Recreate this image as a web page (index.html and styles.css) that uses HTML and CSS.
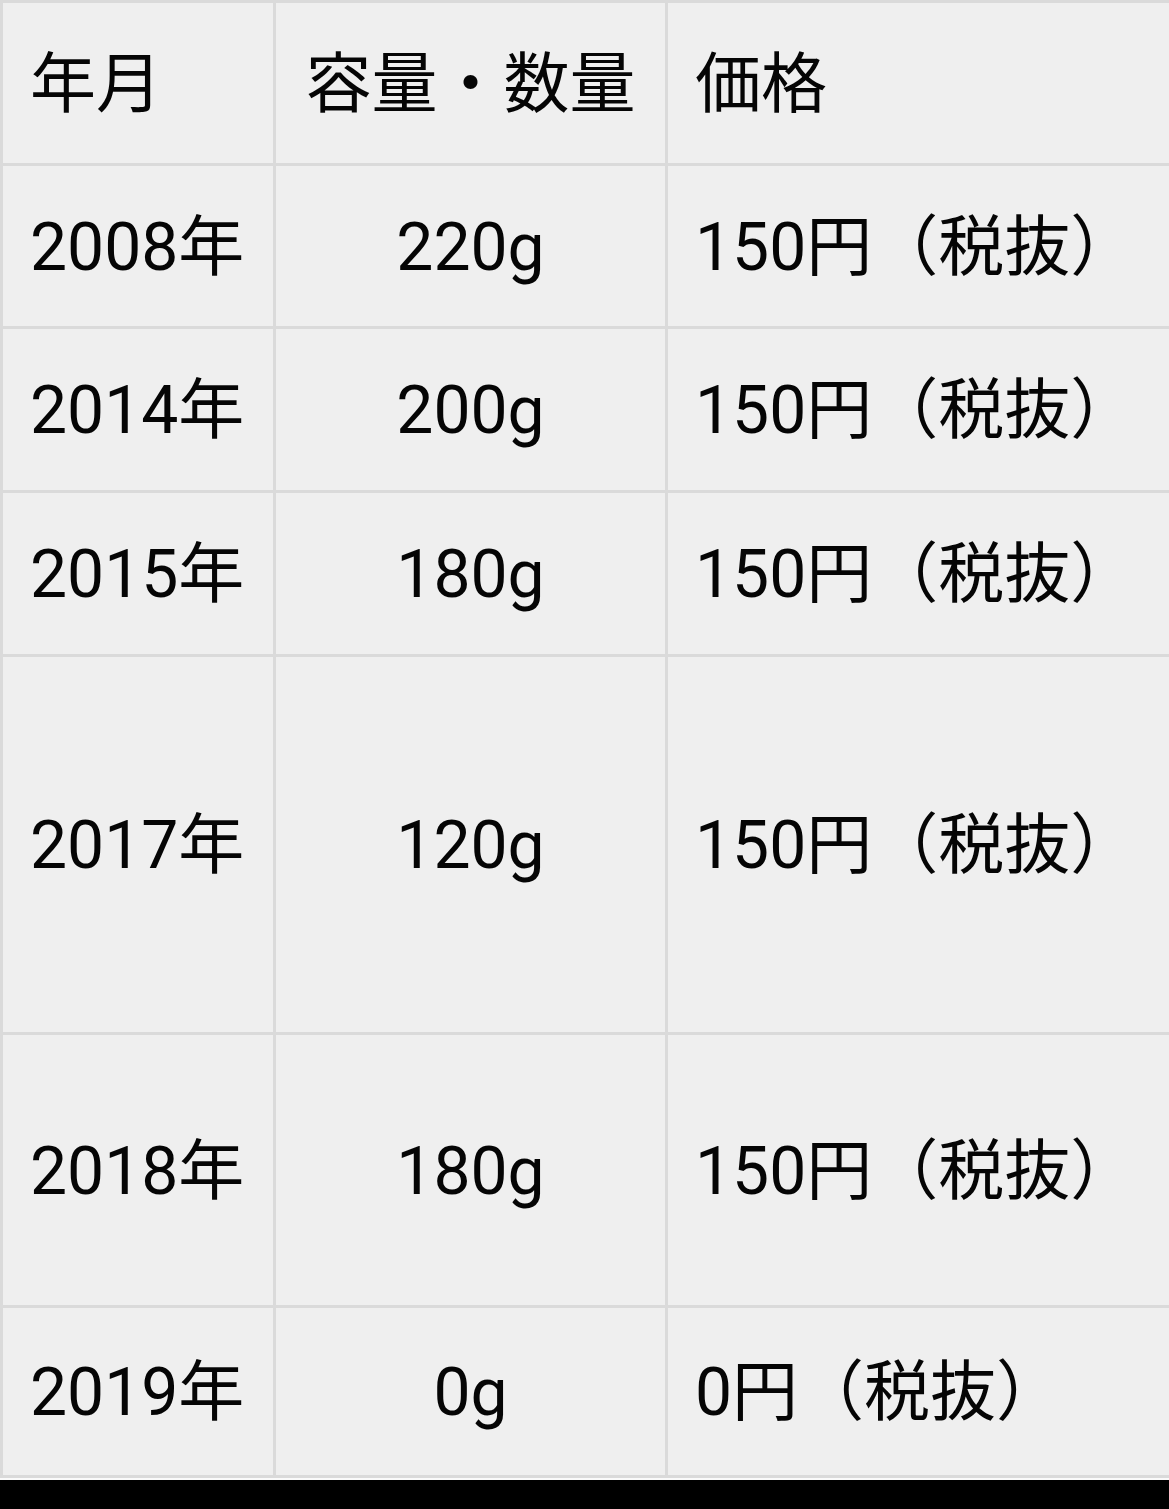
FILE: index.html
```html
<!DOCTYPE html>
<html lang="ja">
<head>
<meta charset="utf-8">
<title>価格表</title>
<link rel="stylesheet" href="styles.css">
</head>
<body>
<div class="sheet">
  <table class="price-table">
    <colgroup>
      <col class="c-year">
      <col class="c-qty">
      <col class="c-price">
    </colgroup>
    <tr class="row-head">
      <th class="left">年月</th>
      <th class="center">容量・数量</th>
      <th class="left">価格</th>
    </tr>
    <tr class="row-a">
      <td class="left">2008年</td>
      <td class="center">220g</td>
      <td class="left">150円（税抜）</td>
    </tr>
    <tr class="row-b">
      <td class="left">2014年</td>
      <td class="center">200g</td>
      <td class="left">150円（税抜）</td>
    </tr>
    <tr class="row-b">
      <td class="left">2015年</td>
      <td class="center">180g</td>
      <td class="left">150円（税抜）</td>
    </tr>
    <tr class="row-tall">
      <td class="left">2017年</td>
      <td class="center">120g</td>
      <td class="left">150円（税抜）</td>
    </tr>
    <tr class="row-mid">
      <td class="left">2018年</td>
      <td class="center">180g</td>
      <td class="left">150円（税抜）</td>
    </tr>
    <tr class="row-last">
      <td class="left">2019年</td>
      <td class="center">0g</td>
      <td class="left">0円（税抜）</td>
    </tr>
  </table>
</div>
</body>
</html>
```

FILE: styles.css
```css
html, body {
  margin: 0;
  padding: 0;
}
body {
  background: #000;
  width: 1169px;
  height: 1509px;
  overflow: hidden;
}
.sheet {
  background: #fafafa;
  padding-bottom: 2px;
  width: 1169px;
  overflow: hidden;
}
.price-table {
  border-collapse: separate;
  border-spacing: 3px;
  background: #dadada;
  width: 1210px;
  table-layout: fixed;
  font-family: Roboto, "Noto Sans CJK JP", sans-serif;
  font-size: 66px;
  color: #050505;
}
.c-year { width: 270px; }
.c-qty { width: 389px; }
.c-price { width: auto; }
.price-table th,
.price-table td {
  background: #efefef;
  font-weight: 400;
  padding: 3px 0 0 27px;
  vertical-align: middle;
  line-height: 1;
  white-space: nowrap;
}
.price-table .center {
  text-align: center;
  padding: 3px 0 0 0;
}
.price-table .left {
  text-align: left;
}
.row-head { height: 160px; }
.row-a { height: 160px; }
.row-b { height: 161px; }
.row-tall { height: 375px; }
.row-mid { height: 270px; }
.row-last { height: 167px; }
```
